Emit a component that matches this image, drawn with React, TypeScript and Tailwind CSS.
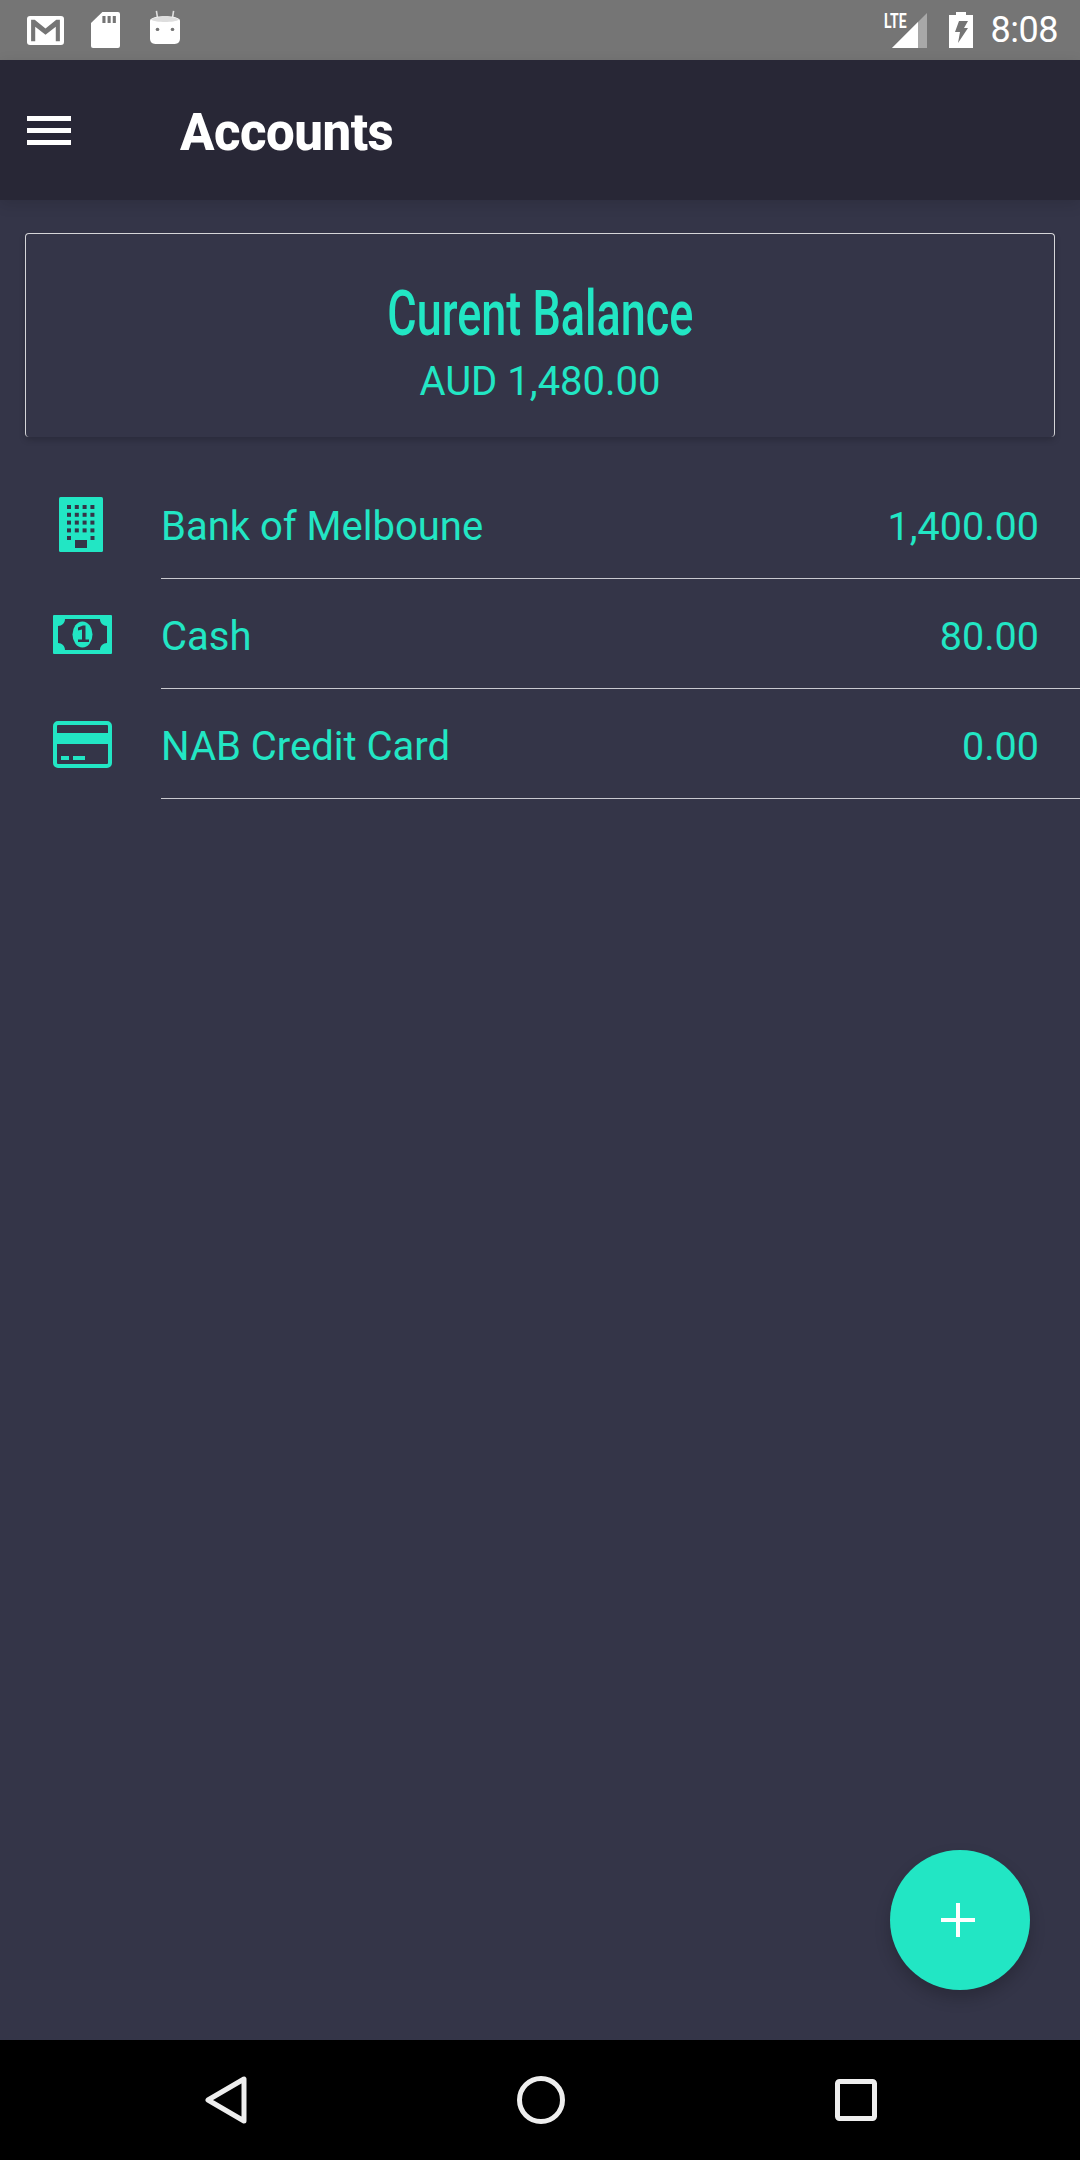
const accounts = [
  { name: "Bank of Melboune", value: "1,400.00", icon: <BuildingIcon /> },
  { name: "Cash", value: "80.00", icon: <CashIcon /> },
  { name: "NAB Credit Card", value: "0.00", icon: <CardIcon /> },
];

function GmailIcon() {
  return (
    <svg width="37" height="29" viewBox="0 0 36 30" preserveAspectRatio="none" className="block">
      <rect width="36" height="30" rx="3" fill="#fff" />
      <path d="M4 26V4h3.500L18 13 28.500 4H32v22h-4V11l-10 8.500L8 11v15z" fill="#757575" />
    </svg>
  );
}

function SdIcon() {
  return (
    <svg width="29" height="36" viewBox="0 0 28 36" preserveAspectRatio="none" className="block">
      <path
        d="M11 0h15a2 2 0 0 1 2 2v32a2 2 0 0 1-2 2H2a2 2 0 0 1-2-2V11z"
        fill="#fff"
      />
      <path d="M11 4h3v7h-3zM16 4h3v7h-3zM21 4h3v7h-3z" fill="#757575" />
    </svg>
  );
}

function MarshmallowIcon() {
  return (
    <svg width="30" height="35" viewBox="0 0 28 36" preserveAspectRatio="none" className="block">
      <path d="M6 1l1 7M22 1l-1 7" stroke="#ddd" strokeWidth="1.5" fill="none" />
      <path d="M0 11c0-6 28-6 28 0v18c0 5-3 6-6 6H6c-3 0-6-1-6-6z" fill="#fff" />
      <path d="M1 10c2-4 24-4 26 0-4 3-22 3-26 0z" fill="#ddd" />
      <circle cx="7" cy="20" r="1.7" fill="#757575" />
      <circle cx="21" cy="20" r="1.7" fill="#757575" />
    </svg>
  );
}

function SignalIcon() {
  return (
    <svg width="35" height="35" viewBox="0 0 35 35" className="block">
      <path d="M35 0v35H0z" fill="#a8a8a8" />
      <path d="M26 9v26H0z" fill="#fff" />
    </svg>
  );
}

function BatteryIcon() {
  return (
    <svg width="24" height="36" viewBox="0 0 24 36" className="block">
      <path d="M7 0h10v3h7v33H0V3h7z" fill="#fff" />
      <path d="M10 9h9l-4 7h4l-10 15 2-11H6z" fill="#757575" />
    </svg>
  );
}

function BuildingIcon() {
  const dots = [];
  for (let row = 0; row < 4; row++) {
    for (let col = 0; col < 4; col++) {
      dots.push(<rect key={`${row}-${col}`} x={8 + col * 7.8} y={8 + row * 7.8} width="4" height="4" fill="#343548" />);
    }
  }
  return (
    <svg width="44" height="55" viewBox="0 0 44 55" className="block -ml-[4px]">
      <rect width="44" height="55" rx="1.5" fill="#22e6c4" />
      {dots}
      <rect x="8" y="39" width="4" height="4" fill="#343548" />
      <rect x="31.5" y="39" width="4" height="4" fill="#343548" />
      <rect x="16" y="43" width="12" height="8" fill="#343548" />
    </svg>
  );
}

function CashIcon() {
  return (
    <svg width="59" height="39" viewBox="0 0 59 39" className="block">
      <rect width="59" height="39" rx="1" fill="#22e6c4" />
      <path
        d="M12 4h35c0 4 3 7 7 7v17c-4 0-7 3-7 7H12c0-4-3-7-7-7V11c4 0 7-3 7-7z"
        fill="#343548"
      />
      <ellipse cx="29.5" cy="19.5" rx="10" ry="13" fill="#22e6c4" />
      <path d="M25 12.500l5-2h2.500v14H36v2.500H25v-2.500h4v-10l-4 1z" fill="#343548" />
    </svg>
  );
}

function CardIcon() {
  return (
    <svg width="59" height="47" viewBox="0 0 59 47" className="block">
      <rect x="2" y="2" width="55" height="43" rx="3" fill="none" stroke="#22e6c4" strokeWidth="4" />
      <rect x="2" y="12" width="55" height="11" fill="#22e6c4" />
      <rect x="8" y="35" width="8" height="4" fill="#22e6c4" />
      <rect x="20" y="35" width="12" height="4" fill="#22e6c4" />
    </svg>
  );
}

export default function App() {
  return (
    <div className="flex h-[2160px] w-[1080px] flex-col overflow-hidden bg-[#343548] font-['Roboto',sans-serif]">
      {/* status bar */}
      <div className="flex h-[60px] shrink-0 items-center bg-[#757575] pl-[27px] pr-[22px]">
        <div className="flex items-center">
          <GmailIcon />
          <div className="ml-[27px]">
            <SdIcon />
          </div>
          <div className="ml-[30px] -translate-y-[3px]">
            <MarshmallowIcon />
          </div>
        </div>
        <div className="ml-auto flex items-center">
          <div className="relative">
            <span className="absolute -left-[8px] top-0 origin-left scale-x-[0.7] text-[20px] font-bold leading-[17px] text-white">
              LTE
            </span>
            <SignalIcon />
          </div>
          <div className="ml-[22px]">
            <BatteryIcon />
          </div>
          <span className="ml-[18px] text-[36px] leading-none tracking-[-0.5px] text-white">8:08</span>
        </div>
      </div>

      {/* app bar */}
      <header className="z-10 flex h-[140px] shrink-0 items-center bg-[#282736] pl-[27px] shadow-[0_4px_14px_rgba(0,0,0,0.12)]">
        <div className="flex w-[44px] flex-col gap-[7px]">
          <span className="h-[5px] bg-white" />
          <span className="h-[5px] bg-white" />
          <span className="h-[5px] bg-white" />
        </div>
        <h1 className="ml-[109px] translate-y-[3px] text-[51px] font-extrabold tracking-[-0.5px] text-white">Accounts</h1>
      </header>

      <main className="relative flex-1">
        <section className="mx-[25px] mt-[33px] flex h-[204px] flex-col items-center rounded-[4px] border border-b-0 border-[#d5d5d8] bg-[#343548] text-[#22e6c4] shadow-[0_3px_6px_rgba(0,0,0,0.18)]">
          <h2 className="mt-[44px] scale-x-[0.714] text-[63px] font-medium leading-[72px]">Curent Balance</h2>
          <p className="mt-[9px] text-[40px] leading-[46px]">AUD 1,480.00</p>
        </section>

        <ul className="mt-[32px]">
          {accounts.map((account) => (
            <li key={account.name} className="flex h-[110px] items-stretch">
              <div className="flex w-[165px] shrink-0 items-center justify-center">{account.icon}</div>
              <div className="-ml-[4px] flex flex-1 items-center justify-between border-b border-[#c9c9cf] pr-[41px] text-[#22e6c4]">
                <span className="translate-y-[3px] text-[40px]">{account.name}</span>
                <span className="translate-y-[3px] text-[39.500px]">{account.value}</span>
              </div>
            </li>
          ))}
        </ul>

        <button className="absolute bottom-[50px] right-[50px] flex h-[140px] w-[140px] items-center justify-center rounded-full bg-[#22e6c4] shadow-[0_8px_16px_rgba(0,0,0,0.2)]">
          <svg width="34" height="34" viewBox="0 0 34 34" className="block -translate-x-[2px]">
            <path d="M15 0h4v15h15v4H19v15h-4V19H0v-4h15z" fill="#fff" />
          </svg>
        </button>
      </main>

      {/* nav bar */}
      <nav className="flex h-[120px] shrink-0 items-center justify-between bg-black pl-[205px] pr-[203px]">
        <svg width="42" height="48" viewBox="0 0 42 48" className="block">
          <path d="M39 3v42L3 24z" fill="none" stroke="#eee" strokeWidth="5" strokeLinejoin="round" />
        </svg>
        <svg width="48" height="48" viewBox="0 0 48 48" className="block">
          <circle cx="24" cy="24" r="21.500" fill="none" stroke="#eee" strokeWidth="5" />
        </svg>
        <svg width="42" height="42" viewBox="0 0 42 42" className="block">
          <rect x="2.500" y="2.500" width="37" height="37" rx="2" fill="none" stroke="#eee" strokeWidth="5" />
        </svg>
      </nav>
    </div>
  );
}
